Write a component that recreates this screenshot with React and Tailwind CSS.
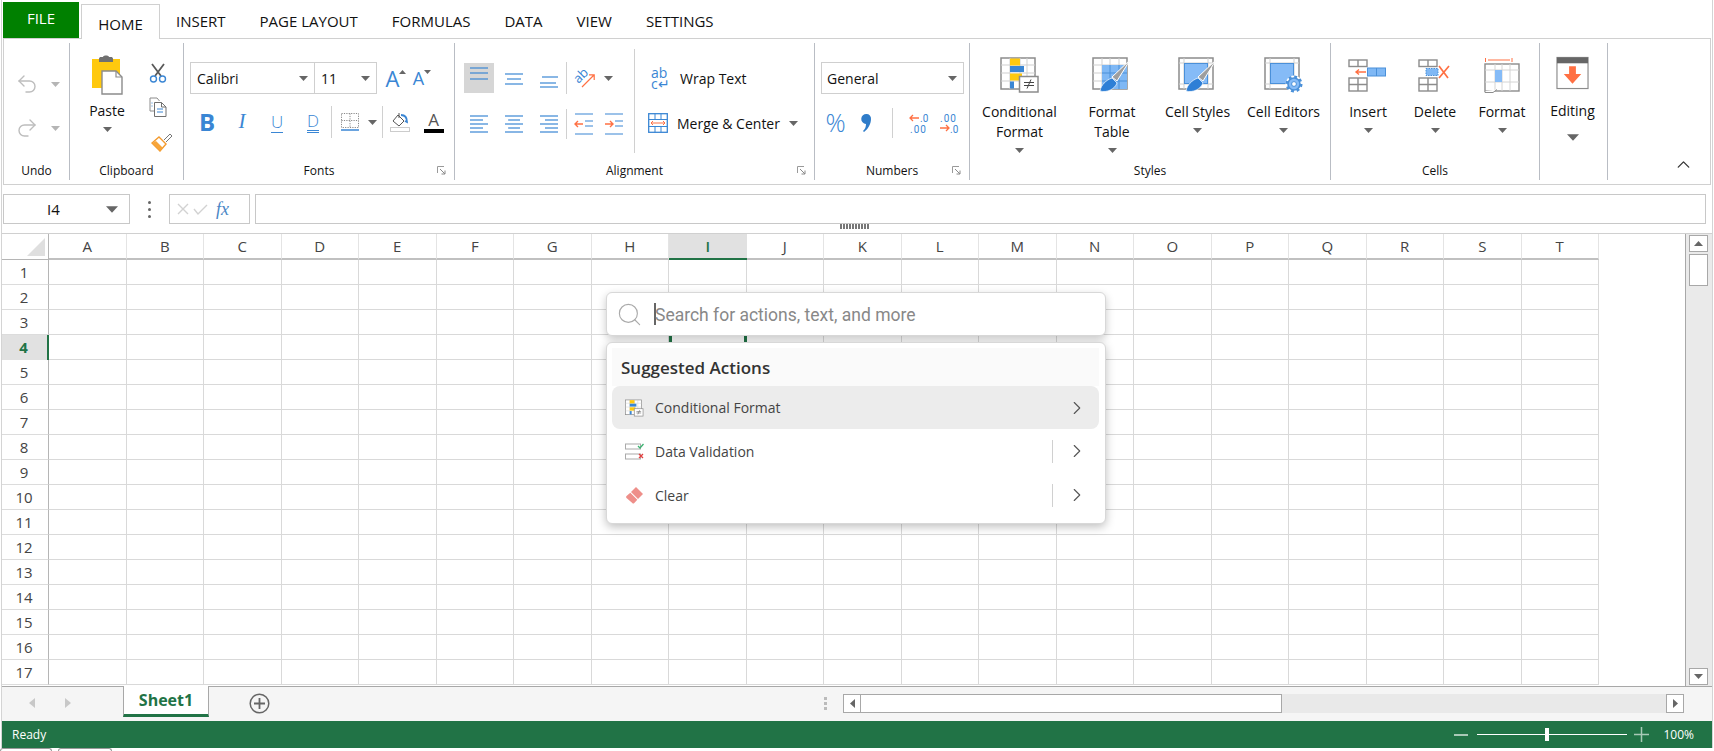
import { ChevronRight, Search, Undo2, Redo2, ChevronUp } from "lucide-react";

const COLS = "ABCDEFGHIJKLMNOPQRST".split("");
const ROWS = Array.from({ length: 17 }, (_, i) => i + 1);
const BLUE = "#3a86d4";
const ORANGE = "#ff7043";
const GRAY = "#8c8c8c";

function Caret({ big, light }) {
  return (
    <svg width={big ? 12 : 9} height={big ? 7 : 5} viewBox="0 0 9 5" className="shrink-0">
      <path d="M0 0h9L4.5 5z" fill={light ? "#b5b5b5" : "#666"} />
    </svg>
  );
}

function Launcher() {
  return (
    <svg width="9" height="9" viewBox="0 0 9 9">
      <path d="M.5 7V.5H7" fill="none" stroke="#9a9a9a" />
      <path d="M3 3l5 5M8 4.5V8H4.5" fill="none" stroke="#8a8a8a" />
    </svg>
  );
}

function Lines({ lines, h = 30, w = 20 }) {
  return (
    <svg width={w} height={h} viewBox={`0 0 ${w} ${h}`}>
      {lines.map(([a, b, y, c], i) => (
        <path key={i} d={`M${a} ${y}H${b}`} stroke={c || BLUE} strokeWidth="1.2" />
      ))}
    </svg>
  );
}

function Sep({ className }) {
  return <div className={`w-px bg-[#d0d0d0] ${className}`} />;
}

function CondFormatIcon({ small }) {
  return (
    <svg width={small ? 20 : 40} height={small ? 18 : 36} viewBox="0 0 40 36">
      <rect x="1" y="1" width="34" height="31" fill="#fff" stroke={GRAY} strokeWidth="1.5" />
      <path d="M10 1v31M20 1v31M27 1v31M1 8h34M1 16h34M1 24h34" stroke="#cfcfcf" />
      <rect x="10" y="1.5" width="10" height="7" fill="#ffc90e" />
      <rect x="10" y="9" width="14" height="6" fill={BLUE} />
      <rect x="10" y="16.5" width="12" height="7" fill="#ffc90e" />
      <rect x="10" y="24.5" width="4" height="7" fill={BLUE} />
      <rect x="19.5" y="19.5" width="18.5" height="15.5" fill="#fff" stroke={GRAY} strokeWidth="1.5" />
      <path d="M24 25.5h10M24 28.5h10M31 22.5l-4 9" stroke="#444" fill="none" />
    </svg>
  );
}

function Brush() {
  return (
    <g>
      <path d="M38 3L25 24l-5-4z" fill="#9e9e9e" stroke="#fff" strokeWidth="1" />
      <path d="M8 34c1-6 6-11 12-13l5 5c-2 6-10 10-17 8z" fill="#2e7fd6" stroke="#fff" strokeWidth=".7" />
    </g>
  );
}

function FormatTableIcon() {
  return (
    <svg width="40" height="36" viewBox="0 0 40 36">
      <rect x="1" y="1" width="34" height="31" fill="#fff" stroke={GRAY} strokeWidth="1.5" />
      <path d="M10 1v31M18 1v31M27 1v31M1 8h34M1 16h34M1 24h34" stroke="#cfcfcf" />
      <rect x="10" y="8" width="25" height="24" fill="#7fb8f5" />
      <path d="M18 8v24M27 8v24M10 16h25M10 24h25" stroke="#4a90d9" />
      <Brush />
    </svg>
  );
}

function CellStylesIcon() {
  return (
    <svg width="40" height="36" viewBox="0 0 40 36">
      <rect x="1" y="1" width="34" height="31" fill="#fff" stroke={GRAY} strokeWidth="1.5" />
      <path d="M6 1v31M30 1v31M1 6h34M1 27h34" stroke="#cfcfcf" />
      <rect x="6.5" y="6.5" width="23" height="20" fill="#85bbf7" stroke="#4a90d9" />
      <Brush />
    </svg>
  );
}

function CellEditorsIcon() {
  return (
    <svg width="40" height="36" viewBox="0 0 40 36">
      <rect x="1" y="1" width="34" height="31" fill="#fff" stroke={GRAY} strokeWidth="1.5" />
      <path d="M6 1v31M30 1v31M1 6h34M1 27h34" stroke="#cfcfcf" />
      <rect x="6.5" y="6.5" width="23" height="20" fill="#85bbf7" stroke="#4a90d9" />
      <circle cx="30" cy="27" r="8.5" fill="#fff" />
      <circle cx="30" cy="27" r="6" fill="#85bbf7" stroke="#4a90d9" strokeWidth="1.6" />
      <circle cx="30" cy="27" r="7.3" fill="none" stroke="#4a90d9" strokeWidth="2.4" strokeDasharray="2.9 2.83" />
      <circle cx="30" cy="27" r="2.4" fill="#fff" stroke="#4a90d9" />
    </svg>
  );
}

function MiniGrid({ y, rows = 1 }) {
  const h = rows === 1 ? 6.5 : 13;
  return (
    <g>
      <rect x="1" y={y} width="18" height={h} fill="#fff" stroke={GRAY} strokeWidth="1.4" />
      <path d={`M10 ${y}v${h}${rows === 2 ? `M1 ${y + 6.5}h18` : ""}`} stroke={GRAY} strokeWidth="1.4" />
    </g>
  );
}

function InsertIcon() {
  return (
    <svg width="40" height="33" viewBox="0 0 40 33">
      <MiniGrid y={1} />
      <MiniGrid y={19} rows={2} />
      <rect x="19.5" y="9" width="18" height="8" fill="#7fb8f5" stroke="#4a90d9" />
      <path d="M28.5 9v8" stroke="#4a90d9" />
      <path d="M18 13H8M11 10.5L8 13l3 2.5" fill="none" stroke={ORANGE} strokeWidth="1.4" />
    </svg>
  );
}

function DeleteIcon() {
  return (
    <svg width="34" height="33" viewBox="0 0 34 33">
      <MiniGrid y={1} />
      <MiniGrid y={19} rows={2} />
      <rect x="8" y="9.5" width="12" height="7" fill="#7fb8f5" stroke="#4a90d9" strokeDasharray="1.5 1" />
      <path d="M21 7l9 12M31 7L21 19" stroke={ORANGE} strokeWidth="1.7" fill="none" />
    </svg>
  );
}

function FormatIcon() {
  return (
    <svg width="36" height="36" viewBox="0 0 36 36">
      <path d="M1.5 1v4M28 1v4M4 3h22" stroke={ORANGE} fill="none" />
      <rect x="1" y="7" width="34" height="27" fill="#fff" stroke={GRAY} strokeWidth="1.4" />
      <path d="M11 7v27M18 7v27M26 7v27M1 13h34M1 25h34" stroke="#d4d4d4" />
      <rect x="11" y="13" width="7" height="12" fill="#85bbf7" />
      <path d="M1 34v1.5h8l4-3" fill="#fff" stroke={GRAY} />
    </svg>
  );
}

function EditingIcon() {
  return (
    <svg width="33" height="34" viewBox="0 0 34 34" className="-translate-y-[2px]">
      <rect x="1" y="1" width="32" height="32" fill="#fff" stroke={GRAY} strokeWidth="1.2" />
      <rect x="1" y="1" width="32" height="6" fill="#666" />
      <path d="M13.5 10h7v8h5.5L17 28 8 18h5.5z" fill={ORANGE} />
    </svg>
  );
}

function PasteIcon() {
  return (
    <svg width="34" height="40" viewBox="0 0 34 40">
      <path d="M2 4h28v29H2z" fill="#ffc90e" />
      <path d="M9 4c0-1.5 1-2 2-2h2c0-2 6-2 6 0h2c1 0 2 .5 2 2v3H9z" fill="#707070" />
      <path d="M12 16h14l6 6v17H12z" fill="#fff" stroke={GRAY} strokeWidth="1.4" />
      <path d="M26 16v6h6" fill="none" stroke={GRAY} strokeWidth="1.2" />
    </svg>
  );
}

function CutIcon() {
  return (
    <svg width="18" height="20" viewBox="0 0 18 20">
      <path d="M3 1l9 12M15 1L6 13" stroke="#5a5a5a" strokeWidth="1.8" fill="none" />
      <circle cx="4.5" cy="16" r="3" fill="none" stroke={BLUE} strokeWidth="1.4" />
      <circle cx="13.5" cy="16" r="3" fill="none" stroke={BLUE} strokeWidth="1.4" />
    </svg>
  );
}

function CopyIcon() {
  return (
    <svg width="18" height="20" viewBox="0 0 18 20">
      <path d="M1 1h7l2.5 3M1 1v13h4" fill="none" stroke={GRAY} />
      <path d="M5.5 5.5h7l4.5 4.5v9.5H5.5z" fill="#fff" stroke="#707070" />
      <path d="M12.5 5.5V10H17" fill="none" stroke="#707070" />
      <path d="M2.5 6h1M2.5 9h1M8 12h6M8 15h6" stroke={BLUE} />
    </svg>
  );
}

function PainterIcon() {
  return (
    <svg width="22" height="20" viewBox="0 0 22 20">
      <path d="M13 8l6-6 2 2-6 6" fill="#fff" stroke="#777" />
      <path d="M8 5l7 7-6 7-8-8z" fill="#fff" stroke="#f39a2d" strokeWidth="1.4" />
      <path d="M1 11l4-2 7 7-3 3z" fill="#f7a53a" />
    </svg>
  );
}

function BigButton({ icon, label, className, caretClass = "mt-[6px]", textClass = "mt-[9px]", bigCaret }) {
  return (
    <div className={`flex flex-col items-center pt-[14px] ${className}`}>
      <div className="h-[36px] flex items-center justify-center">{icon}</div>
      <div className={`text-center leading-[20px] text-[14px] whitespace-pre-line ${textClass}`}>{label}</div>
      <div className={caretClass}>
        <Caret big={bigCaret} />
      </div>
    </div>
  );
}

function Group({ className, caption, launcher, children }) {
  return (
    <div className={`flex flex-col h-[137px] shrink-0 border-r border-[#b9bdc4] ${className}`}>
      <div className="h-[118px] flex">{children}</div>
      <div className="h-[19px] grid grid-cols-[1fr_auto_1fr] items-center">
        <span />
        <span className="text-[12px] leading-[19px]">{caption}</span>
        <span className="justify-self-end pr-[8px] flex">{launcher && <Launcher />}</span>
      </div>
    </div>
  );
}

function Select({ className, label, pad = "pl-[6px] pr-[6px]" }) {
  return (
    <div className={`h-[32px] flex items-center justify-between border border-[#cfcfcf] text-[14px] ${pad} ${className}`}>
      <span>{label}</span>
      <Caret />
    </div>
  );
}

function Slot({ className, children }) {
  return <div className={`flex items-center justify-center shrink-0 ${className}`}>{children}</div>;
}

function Ribbon() {
  return (
    <div className="mx-px h-[147px] border border-[#d0d0d0] pt-[4px] flex">
      <Group className="w-[66px]" caption="Undo">
        <div className="flex flex-col pt-[30px] gap-[22px]">
          {[Undo2, Redo2].map((Ic, i) => (
            <div key={i} className="flex items-center h-[22px]">
              <Slot className="w-[42px] pl-[4px]">
                <Ic size={24} strokeWidth={1.4} color="#bdbdbd" />
              </Slot>
              <Slot className="w-[16px] pl-[2px]">
                <Caret light />
              </Slot>
            </div>
          ))}
        </div>
      </Group>

      <Group className="w-[114px]" caption="Clipboard">
        <div className="w-[74px] flex flex-col items-center pt-[12px]">
          <PasteIcon />
          <div className="mt-[6px] leading-[20px] text-[14px]">Paste</div>
          <div className="mt-[6px]">
            <Caret />
          </div>
        </div>
        <div className="flex flex-col pt-[20px] pl-[5px] gap-[14px]">
          <CutIcon />
          <CopyIcon />
          <div className="pl-[2px] pt-[1px]">
            <PainterIcon />
          </div>
        </div>
      </Group>

      <Group className="w-[271px]" caption="Fonts" launcher>
        <div className="flex flex-col pt-[19px] pl-[6px]">
          <div className="flex items-center">
            <Select className="w-[125px]" label="Calibri" />
            <Select className="w-[63px] -ml-px" label="11" />
            <Slot className="w-[34px] pl-[4px] text-[#3a86d4] text-[22px] leading-none">
              <span>A</span>
              <svg width="7" height="4" viewBox="0 0 7 4" className="mb-[12px]"><path d="M0 4l3.5-4L7 4z" fill="#666" /></svg>
            </Slot>
            <Slot className="w-[22px] text-[#3a86d4] text-[18px] leading-none">
              <span>A</span>
              <svg width="7" height="4" viewBox="0 0 7 4" className="mb-[12px]"><path d="M0 0l3.5 4L7 0z" fill="#666" /></svg>
            </Slot>
          </div>
          <div className="flex items-center mt-[12px] h-[32px] -ml-[1px] text-[#3a86d4]">
            <Slot className="w-[36px] text-[24px] font-bold">B</Slot>
            <Slot className="w-[34px] text-[21px] italic font-['Liberation_Serif',serif]">I</Slot>
            <Slot className="w-[36px] text-[17px] font-light"><span className="border-b border-[#3a86d4] leading-[20px]">U</span></Slot>
            <Slot className="w-[36px] text-[17px] font-light"><span className="border-b-[3px] border-double border-[#3a86d4] leading-[19px]">D</span></Slot>
            <Sep className="h-[32px]" />
            <Slot className="w-[36px]">
              <svg width="18" height="18" viewBox="0 0 18 18">
                <path d="M.5 .5h17v14H.5zM9 .5v14M.5 7.5h17" fill="none" stroke="#888" strokeDasharray="1.2 1.2" />
                <path d="M0 17h18" stroke={BLUE} strokeWidth="1.5" />
              </svg>
            </Slot>
            <Slot className="w-[9px]"><Caret /></Slot>
            <Sep className="h-[32px] ml-[5px]" />
            <Slot className="w-[34px]">
              <svg width="20" height="20" viewBox="0 0 20 20">
                <path d="M3 9l5-6 6 6-5 5z" fill="#fff" stroke="#555" />
                <path d="M9 1v5" stroke="#555" />
                <path d="M11 3c4 0 6 3 6 7l-2-1" fill="none" stroke={BLUE} strokeWidth="1.8" />
                <rect x=".5" y="15.5" width="19" height="4" fill="#fff" stroke="#ccc" />
              </svg>
            </Slot>
            <Slot className="w-[33px]">
              <div className="flex flex-col items-center w-[20px] text-[#555] text-[17px] leading-[16px]">
                A
                <div className="w-[20px] h-[4px] bg-black mt-[1px]" />
              </div>
            </Slot>
          </div>
        </div>
      </Group>

      <Group className="w-[360px]" caption="Alignment" launcher>
        <div className="w-[179px] flex flex-col pt-[20px] pl-[9px]">
          <div className="flex items-center h-[30px]">
            <Slot className="w-[30px] h-[30px] bg-[#d6d6d6]">
              <Lines lines={[[1, 19, 5], [1, 19, 10], [1, 19, 16]]} />
            </Slot>
            <Slot className="w-[40px]">
              <Lines lines={[[1, 19, 11], [3, 17, 16], [1, 19, 21]]} />
            </Slot>
            <Slot className="w-[30px]">
              <Lines lines={[[3, 19, 14], [1, 17, 20], [1, 19, 24]]} />
            </Slot>
            <Sep className="h-[32px] ml-[2px]" />
            <Slot className="w-[34px] h-[24px] relative">
              <span className="-rotate-45 text-[13px] leading-none text-[#3a86d4] -translate-x-[3px] -translate-y-[3px]">ab</span>
              <svg width="14" height="14" viewBox="0 0 14 14" className="absolute left-[14px] top-[8px]">
                <path d="M1 13L13 1M8 .8h5.2V6" fill="none" stroke={ORANGE} strokeWidth="1.2" />
              </svg>
            </Slot>
            <Slot className="w-[14px]"><Caret /></Slot>
          </div>
          <div className="flex items-center h-[30px] mt-[16px]">
            <Slot className="w-[30px]">
              <Lines lines={[[1, 19, 7], [1, 14, 11], [1, 19, 15], [1, 14, 19], [1, 19, 23]]} />
            </Slot>
            <Slot className="w-[40px]">
              <Lines lines={[[1, 19, 7], [4, 16, 11], [1, 19, 15], [4, 16, 19], [1, 19, 23]]} />
            </Slot>
            <Slot className="w-[30px]">
              <Lines lines={[[1, 19, 7], [6, 19, 11], [1, 19, 15], [6, 19, 19], [1, 19, 23]]} />
            </Slot>
            <Sep className="h-[30px] ml-[2px]" />
            <Slot className="w-[34px]">
              <svg width="20" height="24" viewBox="0 0 20 24">
                <path d="M1 2h18M11 9h8M11 14h8M1 22h18" stroke={BLUE} strokeWidth="1.2" />
                <path d="M9 12H1M4 9l-3 3 3 3" fill="none" stroke={ORANGE} strokeWidth="1.4" />
              </svg>
            </Slot>
            <Slot className="w-[26px]">
              <svg width="20" height="24" viewBox="0 0 20 24">
                <path d="M1 2h18M11 9h8M11 14h8M1 22h18" stroke={BLUE} strokeWidth="1.2" />
                <path d="M1 12h8M6 9l3 3-3 3" fill="none" stroke={ORANGE} strokeWidth="1.4" />
              </svg>
            </Slot>
          </div>
        </div>
        <Sep className="h-[104px] mt-[6px]" />
        <div className="flex flex-col pt-[20px] text-[14px]">
          <div className="flex items-center h-[30px] pl-[16px]">
            <div className="w-[20px] text-[#3a86d4] text-[14px] leading-[11px] whitespace-pre-line">{"ab\nc↵"}</div>
            <span className="ml-[9px]">Wrap Text</span>
          </div>
          <div className="flex items-center h-[30px] mt-[15px] pl-[13px]">
            <svg width="20" height="20" viewBox="0 0 20 20">
              <rect x=".7" y=".7" width="18.6" height="18.6" fill="#fff" stroke={BLUE} strokeWidth="1.3" />
              <path d="M.7 6.5h18.6M.7 13.5h18.6M7 .7v5.8M13 .7v5.8M7 13.5v5.8M13 13.5v5.8" stroke={BLUE} />
              <path d="M3 10h14M5 8l-2 2 2 2M15 8l2 2-2 2" fill="none" stroke={ORANGE} />
            </svg>
            <span className="ml-[9px]">Merge &amp; Center</span>
            <span className="ml-[9px]"><Caret /></span>
          </div>
        </div>
      </Group>

      <Group className="w-[155px]" caption="Numbers" launcher>
        <div className="flex flex-col pt-[19px] pl-[6px]">
          <Select className="w-[143px]" label="General" pad="pl-[5px] pr-[6px]" />
          <div className="flex items-center mt-[14px] h-[30px] text-[#3a86d4]">
            <Slot className="w-[29px] text-[25px] font-light">%</Slot>
            <Slot className="w-[32px]">
              <svg width="11" height="20" viewBox="0 0 11 20">
                <path d="M5.5 1a4.5 4.5 0 0 1 4.5 5c0 5-3 10-7 13l-1-1c2-2 3-4 3-7a4.5 4.5 0 0 1 .5-10z" fill="#2f7cc9" />
              </svg>
            </Slot>
            <Sep className="h-[30px] ml-[10px]" />
            <Slot className="w-[28px] ml-[13px]">
              <svg width="22" height="21" viewBox="0 0 22 21" className="overflow-visible">
                <path d="M10 5H1M4 2L1 5l3 3" fill="none" stroke={ORANGE} strokeWidth="1.3" />
                <text x="11" y="8.5" fontSize="10" fill={BLUE} fontFamily="Roboto, sans-serif">.0</text>
                <text x="1" y="20" fontSize="10" letterSpacing="1" fill={BLUE} fontFamily="Roboto, sans-serif">.00</text>
              </svg>
            </Slot>
            <Slot className="w-[32px]">
              <svg width="22" height="21" viewBox="0 0 22 21" className="overflow-visible">
                <text x="1" y="8.5" fontSize="10" letterSpacing="1" fill={BLUE} fontFamily="Roboto, sans-serif">.00</text>
                <path d="M1 15h9M7 12l3 3-3 3" fill="none" stroke={ORANGE} strokeWidth="1.3" />
                <text x="11" y="20" fontSize="10" fill={BLUE} fontFamily="Roboto, sans-serif">.0</text>
              </svg>
            </Slot>
          </div>
        </div>
      </Group>

      <Group className="w-[361px]" caption="Styles">
        <BigButton className="w-[99px]" icon={<CondFormatIcon />} label={"Conditional\nFormat"} />
        <BigButton className="w-[86px]" icon={<FormatTableIcon />} label={"Format\nTable"} />
        <BigButton className="w-[85px]" icon={<CellStylesIcon />} label="Cell Styles" />
        <BigButton className="w-[87px]" icon={<CellEditorsIcon />} label="Cell Editors" />
      </Group>

      <Group className="w-[209px]" caption="Cells">
        <BigButton className="w-[74px]" icon={<InsertIcon />} label="Insert" />
        <BigButton className="w-[60px]" icon={<DeleteIcon />} label="Delete" />
        <BigButton className="w-[74px]" icon={<FormatIcon />} label="Format" />
      </Group>

      <Group className="w-[68px]" caption="">
        <BigButton className="w-[65px]" icon={<EditingIcon />} label="Editing" textClass="mt-[8px]" caretClass="mt-[13px]" bigCaret />
      </Group>

      <div className="flex-1 flex items-end justify-end pr-[16px] pb-[9px]">
        <ChevronUp size={21} strokeWidth={1.5} color="#333" />
      </div>
    </div>
  );
}

function FormulaBar() {
  return (
    <div className="h-[49px] border-b border-[#d0d0d0] pt-[9px] px-px">
      <div className="flex h-[30px] text-[15px]">
        <div className="w-[127px] border border-[#c8c8c8] flex items-center pl-[43px] pr-[11px] justify-between">
          <span>I4</span>
          <Caret big />
        </div>
        <div className="w-[39px] flex flex-col items-center justify-center gap-[4px]">
          <span className="size-[3px] bg-[#666] rounded-full" />
          <span className="size-[3px] bg-[#666] rounded-full" />
          <span className="size-[3px] bg-[#666] rounded-full" />
        </div>
        <div className="w-[81px] border border-[#c8c8c8] flex items-center pl-[6px] gap-[3px]">
          <svg width="14" height="14" viewBox="0 0 14 14"><path d="M2 2l10 10M12 2L2 12" stroke="#d2d2d2" strokeWidth="1.4" /></svg>
          <svg width="15" height="14" viewBox="0 0 15 14"><path d="M1 7l4 5 9-9" fill="none" stroke="#d2d2d2" strokeWidth="1.4" /></svg>
          <span className="text-[#4a86c5] italic text-[18px] font-['Liberation_Serif',serif] ml-[5px] leading-none">fx</span>
        </div>
        <div className="ml-[5px] mr-[5px] flex-1 border border-[#c8c8c8]" />
      </div>
      <div className="h-[5px] flex justify-center items-start">
        <div className="w-[29px] h-[5px] bg-[repeating-linear-gradient(90deg,#777_0,#777_2px,#fff_2px,#fff_3px)] -ml-[6px]" />
      </div>
    </div>
  );
}

function Sheet() {
  return (
    <div className="grid grid-cols-[47px_repeat(20,77.5px)] grid-rows-[26px_repeat(17,25px)] w-fit text-[15px] text-[#444]">
      <div className="border-b border-r border-[#b5b5b5] flex items-end justify-end pr-[3px] pb-[3px]">
        <svg width="18" height="18" viewBox="0 0 18 18"><path d="M18 0v18H0z" fill="#dfdfdf" /></svg>
      </div>
      {COLS.map((c) => (
        <div
          key={c}
          className={
            c === "I"
              ? "bg-[#e1e1e1] border-b-2 border-[#217346] text-[#217346] font-semibold flex items-center justify-center"
              : "border-b-2 border-r border-b-[#c0c0c0] border-r-[#e4e4e4] flex items-center justify-center"
          }
        >
          {c}
        </div>
      ))}
      {ROWS.map((r) => [
        <div
          key={`h${r}`}
          className={
            r === 4
              ? "bg-[#e1e1e1] border-r-2 border-[#217346] text-[#217346] font-bold flex items-center justify-center pr-[2px]"
              : "border-r border-b border-r-[#b5b5b5] border-b-[#dcdcdc] flex items-center justify-center pr-[2px]"
          }
        >
          {r}
        </div>,
        ...COLS.map((c) => (
          <div
            key={c + r}
            className={
              c === "I" && r === 4
                ? "border-x-[3px] border-b-2 border-[#217346]"
                : "border-r border-b border-[#d9d9d9]"
            }
          />
        )),
      ])}
    </div>
  );
}

function ActionRow({ icon, label, active }) {
  return (
    <div className={`flex items-center rounded-lg pl-[13px] pr-[13px] ${active ? "h-[43px] bg-[#ececec]" : "h-[44px]"}`}>
      <div className="w-[19px] flex items-center justify-center">{icon}</div>
      <span className="ml-[11px] flex-1 text-[14px] text-[#444]">{label}</span>
      {!active && <Sep className="h-[23px] mr-[13px]" />}
      <ChevronRight size={22} strokeWidth={1.2} color="#555" className="-mr-[2px]" />
    </div>
  );
}

function SearchOverlay() {
  return (
    <div className="absolute left-[604px] top-[58px] w-[500px]">
      <div className="h-[44px] bg-white rounded-md border border-[#d8d8d8] shadow-[0_3px_8px_rgba(0,0,0,0.22)] flex items-center pl-[9px]">
        <Search size={27} strokeWidth={1} color="#aaa" />
        <div className="ml-[11px] border-l-2 border-[#666] h-[22px] flex items-center pt-[2px] text-[17.5px] text-[#888] whitespace-nowrap font-['Roboto',sans-serif]">
          <span className="-ml-[1px]">Search for actions, text, and more</span>
        </div>
      </div>
      <div className="mt-[6px] h-[182px] bg-white rounded-md border border-[#d8d8d8] shadow-[0_3px_10px_rgba(0,0,0,0.25)] pl-[5px] pr-[6px] pt-[5px]">
        <div className="h-[38px] bg-[#fafafa] flex items-center pl-[9px] pt-[2px] text-[17px] font-semibold text-[#333]">
          Suggested Actions
        </div>
        <ActionRow active label="Conditional Format" icon={<CondFormatIcon small />} />
        <ActionRow
          label="Data Validation"
          icon={
            <svg width="19" height="17" viewBox="0 0 19 17">
              <rect x=".5" y="1" width="15" height="5" fill="#fff" stroke="#aaa" />
              <rect x=".5" y="11" width="15" height="5" fill="#fff" stroke="#aaa" />
              <path d="M13 3l2 2 3.5-4" fill="none" stroke="#3cb371" strokeWidth="1.3" />
              <path d="M14 11l4 4M18 11l-4 4" stroke="#e04040" strokeWidth="1.3" />
            </svg>
          }
        />
        <ActionRow
          label="Clear"
          icon={
            <svg width="19" height="19" viewBox="0 0 19 19">
              <path d="M11 1l7 7-5 5-7-7z" fill="#ee8f8a" />
              <path d="M5.3 6.7l7 7-3 3.3q-1 1-2 0L1.5 12q-1-1 0-2z" fill="#ee8f8a" />
            </svg>
          }
        />
      </div>
    </div>
  );
}

function VerticalScroll() {
  return (
    <div className="ml-auto mr-0 w-[27px] border-l border-[#a8a8a8] bg-[#eaeaea] flex flex-col items-center pl-[1px] pr-[3px] pt-px">
      <button className="w-[19px] h-[17px] bg-white border border-[#a8a8a8] flex items-center justify-center">
        <svg width="9" height="5" viewBox="0 0 9 5"><path d="M0 5h9L4.5 0z" fill="#666" /></svg>
      </button>
      <div className="w-[19px] h-[32px] mt-[2px] bg-white border border-[#a8a8a8]" />
      <button className="mt-auto mb-[1px] w-[19px] h-[17px] bg-white border border-[#a8a8a8] flex items-center justify-center">
        <Caret />
      </button>
    </div>
  );
}

function TabBar() {
  return (
    <div className="h-[35px] bg-[#f5f5f5] border-t border-[#a8a8a8] flex">
      <div className="w-[121px] flex items-center pl-[27px] gap-[30px] pb-[3px]">
        <svg width="6" height="10" viewBox="0 0 6 10"><path d="M6 0v10L0 5z" fill="#c8c8c8" /></svg>
        <svg width="6" height="10" viewBox="0 0 6 10"><path d="M0 0v10l6-5z" fill="#c8c8c8" /></svg>
      </div>
      <div className="w-[86px] h-[31px] -mt-px bg-white border-x border-[#a8a8a8] border-b-[3px] border-b-[#217346] flex items-center justify-center text-[16px] font-bold text-[#217346]">
        Sheet1
      </div>
      <div className="ml-[40px] flex items-center pb-[2px]">
        <svg width="21" height="21" viewBox="0 0 21 21">
          <circle cx="10.5" cy="10.5" r="9.3" fill="none" stroke="#666" strokeWidth="1.5" />
          <path d="M10.5 5v11M5 10.5h11" stroke="#666" strokeWidth="1.8" />
        </svg>
      </div>
      <div className="ml-auto flex items-center pb-[2px]">
        <div className="flex flex-col gap-[2px] mr-[16px]">
          <span className="size-[3px] bg-[#bbb]" />
          <span className="size-[3px] bg-[#bbb]" />
          <span className="size-[3px] bg-[#bbb]" />
        </div>
        <div className="w-[841px] h-[19px] bg-[#e9e9e9] flex mr-[28px]">
          <div className="w-[18px] bg-white border border-[#a8a8a8] flex items-center justify-center">
            <svg width="5" height="9" viewBox="0 0 5 9"><path d="M5 0v9L0 4.5z" fill="#666" /></svg>
          </div>
          <div className="w-[421px] bg-white border border-l-0 border-[#a8a8a8]" />
          <div className="ml-auto w-[18px] bg-white border border-[#a8a8a8] flex items-center justify-center">
            <svg width="5" height="9" viewBox="0 0 5 9"><path d="M0 0v9l5-4.5z" fill="#666" /></svg>
          </div>
        </div>
      </div>
    </div>
  );
}

function StatusBar() {
  return (
    <div className="h-[27px] bg-[#217346] flex items-center text-white pl-[10px] text-[12px]">
      <span>Ready</span>
      <div className="ml-auto flex items-center pr-[18px]">
        <div className="w-[14px] h-[2px] bg-[#a9c9b6]" />
        <div className="ml-[9px] w-[150px] h-px bg-white flex items-center pl-[68px]">
          <div className="w-[4px] h-[13px] bg-white" />
        </div>
        <svg width="15" height="15" viewBox="0 0 15 15" className="ml-[7px]">
          <path d="M7.5 0v15M0 7.5h15" stroke="#a9c9b6" strokeWidth="1.5" />
        </svg>
        <span className="ml-[14px] text-[12px]">100%</span>
      </div>
    </div>
  );
}

export default function App() {
  return (
    <div className="w-[1714px] h-[751px] bg-white overflow-hidden text-[#111] font-['Open_Sans',sans-serif]">
      <div className="ml-px w-[1712px] h-[748px] border-x border-[#d4d4d4] flex flex-col">
        <div className="h-[38px] flex items-end pl-px text-[15px] relative z-10">
          <div className="w-[76px] h-[36px] mb-0 bg-[#008000] text-white flex items-center justify-center pb-[3px]">FILE</div>
          <div className="ml-[2px] w-[79px] h-[35px] -mb-px bg-white border border-b-0 border-[#d0d0d0] flex items-center justify-center pt-[4px]">HOME</div>
          <div className="ml-[16px] flex gap-[34px] h-[38px] items-center pt-[5px]">
            <span>INSERT</span>
            <span>PAGE LAYOUT</span>
            <span>FORMULAS</span>
            <span>DATA</span>
            <span>VIEW</span>
            <span>SETTINGS</span>
          </div>
        </div>
        <Ribbon />
        <FormulaBar />
        <div className="relative h-[452px] flex overflow-hidden">
          <Sheet />
          <VerticalScroll />
          <SearchOverlay />
        </div>
        <TabBar />
        <StatusBar />
      </div>
      <div className="h-[3px] flex gap-[6px]">
        <div className="w-[52px] border-t border-x border-[#9a9a9a] rounded-t-sm" />
        <div className="w-[54px] border-t border-x border-[#9a9a9a] rounded-t-sm" />
      </div>
    </div>
  );
}
